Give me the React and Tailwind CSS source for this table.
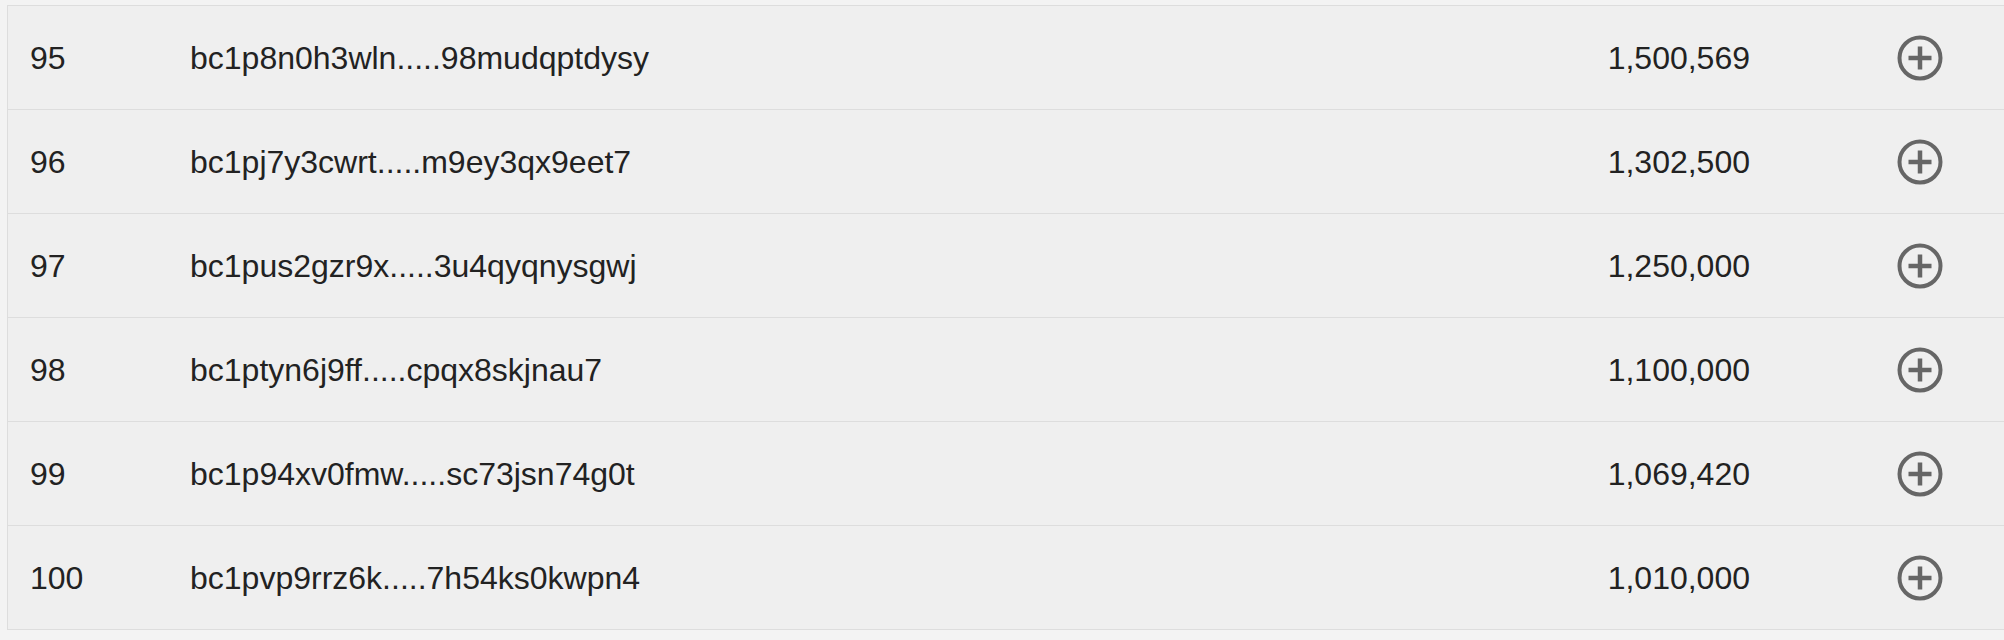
import React from "react";

const rows = [
  { rank: 95, address: "bc1p8n0h3wln.....98mudqptdysy", amount: "1,500,569" },
  { rank: 96, address: "bc1pj7y3cwrt.....m9ey3qx9eet7", amount: "1,302,500" },
  { rank: 97, address: "bc1pus2gzr9x.....3u4qyqnysgwj", amount: "1,250,000" },
  { rank: 98, address: "bc1ptyn6j9ff.....cpqx8skjnau7", amount: "1,100,000" },
  { rank: 99, address: "bc1p94xv0fmw.....sc73jsn74g0t", amount: "1,069,420" },
  { rank: 100, address: "bc1pvp9rrz6k.....7h54ks0kwpn4", amount: "1,010,000" },
];

function PlusCircle() {
  return (
    <svg width="46" height="46" viewBox="0 0 46 46" fill="none">
      <circle cx="23" cy="23" r="20.5" stroke="#666666" strokeWidth="4" />
      <path d="M23 11.5v23M11.5 23h23" stroke="#666666" strokeWidth="4.5" />
    </svg>
  );
}

export default function App() {
  return (
    <div className="w-[2004px] h-[640px] overflow-hidden bg-[#f3f3f3] pt-[5px] font-['Liberation_Sans',Arial,sans-serif] text-[#222222]">
      {/* holder list */}
      <div className="ml-[7px] border-l border-t border-[#dddddd] bg-[#efefef]">
        {rows.map((row) => (
          <div
            key={row.rank}
            className="flex items-center h-[104px] border-b border-[#dddddd] text-[32px] leading-none"
          >
            <div className="w-[182px] pl-[22px] shrink-0">{row.rank}</div>
            <div className="flex-1">{row.address}</div>
            <div className="text-right pr-[2px]">{row.amount}</div>
            <div className="w-[252px] shrink-0 pl-[145px] flex items-center">
              <PlusCircle />
            </div>
          </div>
        ))}
      </div>
    </div>
  );
}
